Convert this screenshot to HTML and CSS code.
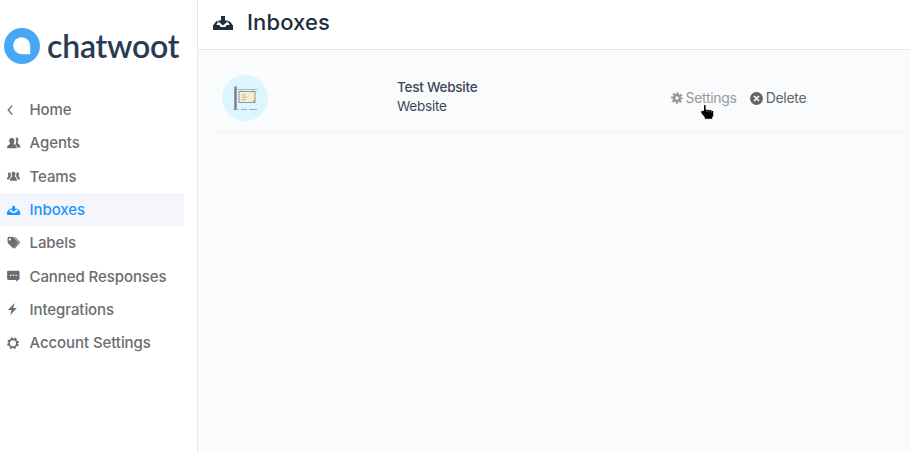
FILE: index.html
```html
<!DOCTYPE html>
<html lang="en">
<head>
<meta charset="utf-8">
<title>Inboxes</title>
<link rel="stylesheet" href="styles.css">
</head>
<body>
<svg class="defs" aria-hidden="true">
  <symbol id="download" viewBox="0 0 20 14">
    <path d="M8 0h4v4.400h3.500L10 9.600 4.500 4.400H8z"/>
    <path d="M3.200 5.200h1.600L6 6.500H4.600L3.400 9h3l1.200 1.900h4.800L13.600 9h3l-1.200-2.500H14l1.200-1.300h1.600L20 9.400V14H0V9.400z"/>
  </symbol>
</svg>
<div class="app">
  <aside class="sidebar">
    <div class="logo">
      <svg class="logo-mark" viewBox="0 0 36 36"><circle cx="18" cy="18" r="18" fill="#47a7f6"/><path d="M26.200 26.200H17.500A8.500 8.500 0 1 1 26.200 17.700z" fill="#fff"/></svg>
      <span class="wordmark">chatwoot</span>
    </div>
    <nav class="nav">
      <a class="item"><svg viewBox="0 0 14 14"><path d="M5.300 2.500 1.200 7l4.100 4.500" fill="none" stroke="currentColor" stroke-width="1.300"/></svg><span>Home</span></a>
      <a class="item"><svg viewBox="0 0 14 14"><path d="M8.500 1.700c2-.6 3.200.7 2.800 2.900-.1 1.100-.6 1.600-.7 2.200 0 1.200 2.700 1 2.900 4.700h-3.300c-.2-1.600-1-2.300-2.200-2.900.4-.7 1.200-1.500 1.200-3.700 0-1.300-.2-2.200-.7-3.200z"/><path d="M4.800 1.900c2.200 0 3 1.500 2.600 3.500-.2 1-.7 1.400-.7 2.100 0 1.500 3 1 3 4.700H0c0-3.700 3-3.200 3-4.700 0-.7-.6-1.100-.8-2.100-.4-2 .5-3.500 2.600-3.500z"/></svg><span>Agents</span></a>
      <a class="item"><svg viewBox="0 0 14 14"><path d="M6.500 2.700c1.500 0 2.100 1 1.900 2.300-.1 1-.7 1.500-.7 2.100 0 1.200 2.200 1 2.300 4.700H3c.1-3.700 2.300-3.500 2.300-4.700 0-.6-.6-1.100-.7-2.100-.2-1.300.4-2.300 1.900-2.300z"/><path d="M2.600 3.500c.5 0 .9.100 1 .4-.2 1.300.1 2.300.7 3.100-1.200 1-1.800 1.800-2 3.500H0c0-2.900 1.500-2.600 1.500-3.700 0-.5-.5-.8-.6-1.600-.1-1 .4-1.700 1.700-1.700zM10.400 3.500c-.5 0-.9.100-1 .4.200 1.300-.1 2.300-.7 3.100 1.200 1 1.800 1.800 2 3.500H13c0-2.900-1.500-2.600-1.500-3.700 0-.5.5-.8.6-1.600.1-1-.4-1.700-1.700-1.700z"/></svg><span>Teams</span></a>
      <a class="item active"><svg viewBox="0 -4 21 21"><use href="#download" width="20" height="14"/></svg><span>Inboxes</span></a>
      <a class="item"><svg viewBox="0 0 14 14"><path fill-rule="evenodd" d="M.4 2.200 1.700.8l4.700.1 5 5.600-5 6.100L.7 7.100zM2.900 2.300a1.150 1.150 0 1 0 0 2.300 1.150 1.150 0 0 0 0-2.300z"/><path d="M7.300.9h1l5 5.600-5.600 6.200-.7-.6 4.900-5.600z"/></svg><span>Labels</span></a>
      <a class="item"><svg viewBox="0 0 14 14"><path fill-rule="evenodd" d="M1.500 1.700h9.600c.9 0 1.400.5 1.400 1.400v6.500c0 .9-.5 1.400-1.400 1.400h-.5v2L8.300 11H1.500c-.9 0-1.400-.5-1.400-1.400V3.100c0-.9.500-1.400 1.400-1.400zM2.800 5.700v1.300h1.500V5.700zm2.800 0v1.300h1.500V5.700zm2.800 0v1.300h1.500V5.700z"/></svg><span>Canned Responses</span></a>
      <a class="item"><svg viewBox="0 0 14 14"><path d="M7.600 1 .9 8h3.600L3.300 13.200l6.500-7.300H6.200z"/></svg><span>Integrations</span></a>
      <a class="item"><svg viewBox="0 0 14 14"><g fill="none" stroke="currentColor"><circle cx="6" cy="7.200" r="3.900" stroke-width="1.700"/><circle cx="6" cy="7.200" r="5" stroke-width="1.800" stroke-dasharray="2 1.927" stroke-dashoffset="-1"/></g></svg><span>Account Settings</span></a>
    </nav>
  </aside>
  <main class="main">
    <header class="header"><svg viewBox="0 0 20 14"><use href="#download"/></svg><h1>Inboxes</h1></header>
    <section class="inbox-row">
      <div class="avatar">
        <svg viewBox="0 0 46 46"><path d="M13.500 11.500v23.500" stroke="#81797f" stroke-width="2.400"/><path d="M15 14.500h20M19.500 14v3M31 14v3" stroke="#a2bcc4" stroke-width="1"/><rect x="17" y="16.500" width="16" height="11" fill="#f4edce" stroke="#8e999b" stroke-width="1"/><path d="M20 19.800h3.500M20 22.200h5M20 24.700h3.500" stroke="#aaa99a" stroke-width=".9"/><path d="M31 27l2-2" stroke="#8e999b"/><path d="M11 34.500h6m2 0h6m2 0h8" stroke="#91a9b2" stroke-width=".9"/></svg>
      </div>
      <div class="details"><strong>Test Website</strong><span>Website</span></div>
      <div class="actions">
        <a class="settings"><svg viewBox="0 0 12 12"><circle cx="6" cy="6" r="3" fill="none" stroke="currentColor" stroke-width="2.600"/><circle cx="6" cy="6" r="4.900" fill="none" stroke="currentColor" stroke-width="1.900" stroke-dasharray="2.200 1.648" stroke-dashoffset="1.100"/></svg><span>Settings</span></a>
        <a class="delete"><svg viewBox="0 0 13 13"><circle cx="6.500" cy="6.500" r="6.500"/><path d="m4 4 5 5m0-5-5 5" stroke="#f9fbfd" stroke-width="1.700"/></svg><span>Delete</span></a>
        <svg class="cursor" viewBox="0 0 15 16"><path d="M3.500.7h2.600v4.600h2.700l2.500.6 2.500 1.300v4.600l-1 1.200v2.300H4.300v-2L.8 9V6.600h2.700z" stroke="#fff" stroke-width="1"/><path d="M7 6v2M9.200 6.300v2M11.400 6.900v1.600" stroke="#aaa" stroke-width=".6"/></svg>
      </div>
    </section>
  </main>
</div>
</body>
</html>
```
FILE: styles.css
```css
* { box-sizing: border-box; }
body { margin: 0; font-family: Inter, sans-serif; overflow: hidden; }
svg { display: block; flex: none; fill: currentColor; }
.defs { display: none; }
.app { display: flex; width: 100%; height: 453px; }
.sidebar { width: 198px; flex: none; background: #fff; border-right: 1px solid #e2e7f0; }
.logo { display: flex; align-items: center; height: 93px; padding-left: 4px; }
.logo-mark { width: 36px; height: 36px; margin-top: -2px; }
.wordmark { margin: -2px 0 0 7px; color: #293b50; font: 600 32px/44px Lato, sans-serif; letter-spacing: -.200px; }
.nav { width: 184px; }
.item { display: flex; align-items: center; height: 33.300px; padding-left: 7px; gap: 8.500px; color: #6b6d70; font-size: 15px; font-weight: 500; letter-spacing: -.080px; white-space: nowrap; }
.item svg { width: 14px; height: 14px; }
.active { color: #1f93ff; background: #f4f6fb; }
.main { flex: 1; min-width: 0; background: #f9fbfd; }
.header { display: flex; align-items: center; height: 50px; padding: 0 0 6px 15px; gap: 14px; color: #1f2d3d; background: #fff; border-bottom: 1px solid #dfe5ed; }
.header svg { width: 20px; height: 14px; margin-top: 2px; }
h1 { margin: 0; font-size: 22px; font-weight: 500; line-height: 30px; letter-spacing: .100px; }
.inbox-row { display: flex; align-items: center; height: 67px; margin: 15px 0 0 15px; padding-left: 8.500px; border-bottom: 1px solid #f0f3f7; }
.avatar { width: 46px; height: 46px; flex: none; border-radius: 50%; background: #ddf5ff; }
.details { display: flex; flex-direction: column; width: 273.500px; margin: -2px 0 0 129.500px; color: #3c4858; font-size: 13.500px; line-height: 19.500px; letter-spacing: -.250px; }
.details strong { font-weight: 500; }
.actions { position: relative; display: flex; gap: 13px; font-size: 14px; line-height: 20px; letter-spacing: -.300px; }
.actions a { display: flex; align-items: center; gap: 3px; }
.settings { color: #97999c; }
.delete { color: #626469; }
.settings svg { width: 12px; height: 12px; }
.delete svg { width: 13px; height: 13px; }
.cursor { position: absolute; left: 29.500px; top: 16px; width: 15px; height: 16px; color: #000; }
```
